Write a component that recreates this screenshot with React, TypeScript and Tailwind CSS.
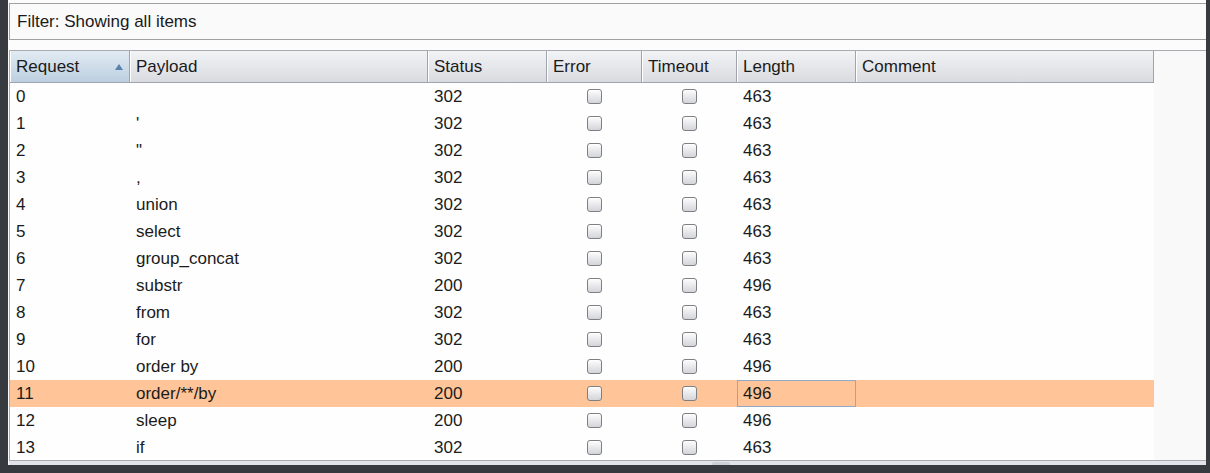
import React from "react";

const rows: [string, string, string, string][] = [
  ["0", "", "302", "463"],
  ["1", "'", "302", "463"],
  ["2", "\"", "302", "463"],
  ["3", ",", "302", "463"],
  ["4", "union", "302", "463"],
  ["5", "select", "302", "463"],
  ["6", "group_concat", "302", "463"],
  ["7", "substr", "200", "496"],
  ["8", "from", "302", "463"],
  ["9", "for", "302", "463"],
  ["10", "order by", "200", "496"],
  ["11", "order/**/by", "200", "496"],
  ["12", "sleep", "200", "496"],
  ["13", "if", "302", "463"],
];

const cols = [
  { name: "Request", w: "w-[120px]" },
  { name: "Payload", w: "w-[298px]" },
  { name: "Status", w: "w-[119px]" },
  { name: "Error", w: "w-[95px]" },
  { name: "Timeout", w: "w-[95px]" },
  { name: "Length", w: "w-[119px]" },
  { name: "Comment", w: "w-[298px]" },
];

function Check() {
  return (
    <div className="w-[15px] h-[15px] rounded-[3px] border border-[#7e7f82] bg-gradient-to-b from-[#fdfdfd] to-[#d4d5da] shadow-[inset_0_1px_0_#ffffff]" />
  );
}

export default function App() {
  return (
    <div
      className="w-[1210px] h-[473px] bg-[#373b3f] flex pl-[8px] text-[#1b1b1b]"
      style={{ fontFamily: '"Liberation Sans", Arial, sans-serif' }}
    >
      <div className="w-[1198px] h-[465px] bg-[#fcfcfc] flex flex-col">
        {/* Filter bar */}
        <div className="mt-[3px] ml-[1px] h-[37px] border-t border-l border-b border-[#9ea0a4] bg-[#fafafa] flex items-center pl-[7px] text-[17px]">
          Filter: Showing all items
        </div>
        <div className="h-[10px]" />
        {/* Table */}
        <div className="ml-[1px] flex-1 border-t border-l border-b border-[#a9abb0] bg-[#f9f9f9] flex flex-col overflow-hidden">
          {/* Header */}
          <div className="flex h-[32px] shrink-0">
            {cols.map((c, i) => (
              <div
                key={c.name}
                className={`${c.w} h-[32px] flex items-center pl-[6px] text-[17px] border-b border-r border-[#9fa3ab] shadow-[inset_1px_0_0_#ffffff] ${
                  i === 0
                    ? "bg-gradient-to-b from-[#e2ebf3] to-[#bccfe0] justify-between pr-[6px]"
                    : "bg-gradient-to-b from-[#f2f3f5] to-[#d9dbe0]"
                }`}
              >
                <span>{c.name}</span>
                {i === 0 && (
                  <svg width="8" height="6" viewBox="0 0 8 6">
                    <path d="M4 0 L8 6 L0 6 Z" fill="#5a82ad" />
                  </svg>
                )}
              </div>
            ))}
          </div>
          {/* Rows */}
          <div className="flex flex-col w-[1144px]">
            {rows.map((r, idx) => {
              const sel = idx === 11;
              return (
                <div
                  key={r[0]}
                  className={`flex h-[27px] shrink-0 text-[17px] ${sel ? "bg-[#ffc599]" : "bg-[#fefefe]"}`}
                >
                  <div className="w-[120px] pl-[6px] flex items-center">{r[0]}</div>
                  <div className="w-[298px] pl-[6px] flex items-center">{r[1]}</div>
                  <div className="w-[119px] pl-[6px] flex items-center">{r[2]}</div>
                  <div className="w-[95px] flex items-center justify-center">
                    <Check />
                  </div>
                  <div className="w-[95px] flex items-center justify-center">
                    <Check />
                  </div>
                  <div
                    className={`w-[119px] pl-[5px] flex items-center ${
                      sel ? "border border-[#8fa9c6]" : "border border-transparent"
                    }`}
                  >
                    {r[3]}
                  </div>
                  <div className="w-[298px]" />
                </div>
              );
            })}
          </div>
        </div>
        {/* splitter */}
        <div className="h-[4px] ml-[1px] bg-[#e3e3ea] flex">
          <div className="ml-[703px] w-[18px] h-[3px] mt-[1px] bg-[#cfd0d6] rounded-t-[2px]" />
        </div>
      </div>
    </div>
  );
}
